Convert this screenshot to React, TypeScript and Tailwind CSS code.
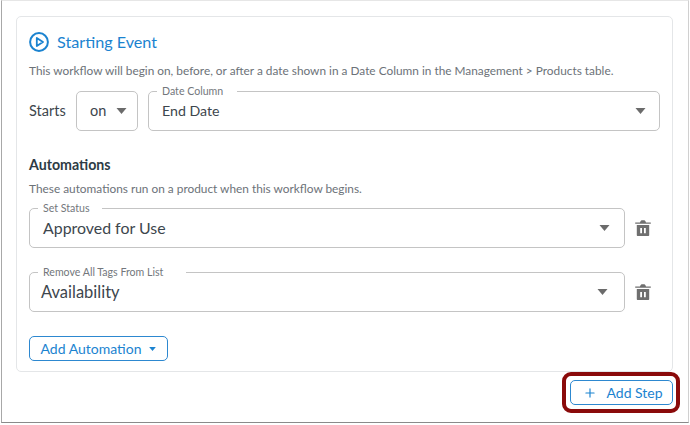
import { Plus } from 'lucide-react';

function Caret({ className = '' }: { className?: string }) {
  return (
    <svg viewBox="0 0 10 6" className={`w-[11px] h-[6px] ${className}`}>
      <path d="M0 0 H10 L5 6 Z" fill="currentColor" />
    </svg>
  );
}

function PlayCircle() {
  return (
    <svg viewBox="0 0 20 20" className="w-5 h-5 shrink-0 text-[#1b83d0]" fill="none" stroke="currentColor">
      <circle cx="10" cy="10" r="8.9" strokeWidth="2" />
      <path d="M7.8 6 L14 10 L7.8 14 Z" strokeWidth="1.8" strokeLinejoin="round" />
    </svg>
  );
}

function Trash() {
  return (
    <svg viewBox="0 0 16 16" className="w-4 h-4 shrink-0 text-[#6f6f6f]" fill="currentColor">
      <path d="M5 2.4 C5.4.8 6.4.2 7.2.2 H8.8 C9.6.2 10.6.8 11 2.4 H15.8 V3.7 H.2 V2.4 Z" />
      <path fillRule="evenodd" d="M1.8 5 H14.2 V15 C14.2 15.6 13.8 16 13.2 16 H2.8 C2.2 16 1.8 15.6 1.8 15 Z M5.2 8 V13.2 H7 V8 Z M9 8 V13.2 H10.8 V8 Z" />
    </svg>
  );
}

function LabeledSelect({
  label,
  value,
  textClass,
  notchClass,
  caretClass = 'pr-[13px]',
}: {
  label: string;
  value: string;
  textClass: string;
  notchClass: string;
  caretClass?: string;
}) {
  return (
    <div className={`relative flex-1 h-10 flex items-center justify-between border border-[#c4c4c4] rounded-[5px] ${caretClass}`}>
      <span className={`absolute -top-[8px] left-[8px] bg-white pl-[5px] text-[10.6px] leading-[14px] text-[#73777c] ${notchClass}`}>
        {label}
      </span>
      <span className={`text-[#3d464d] ${textClass}`}>{value}</span>
      <Caret className="text-[#6b6b6b]" />
    </div>
  );
}

export default function App() {
  return (
    <div className="w-[690px] h-[425px] bg-[#ffffff] overflow-hidden font-['Lato',sans-serif]">
      <div className="h-[423px] ml-[1px] mr-[1px] border-l border-r border-b border-t border-l-[#a8a8a8] border-r-[#d0d0d0] border-b-[#8a8a8a] border-t-[#e6e6e6] pt-[15px] pl-[14px] pr-[15px]">
        {/* Starting event card */}
        <div className="h-[356px] border border-[#e4e6e8] rounded-[5px] pt-[15px] pl-[12px] pr-[12px]">
          <div className="flex items-center gap-2 h-5">
            <PlayCircle />
            <h2 className="text-[16.2px] text-[#1b83d0]">Starting Event</h2>
          </div>
          <p className="mt-[11px] text-[11.85px] leading-[16px] text-[#6c7278] whitespace-nowrap">
            This workflow will begin on, before, or after a date shown in a Date Column in the Management &gt; Products table.
          </p>
          <div className="mt-[12px] flex items-center">
            <span className="text-[14.5px] text-[#3d464d] w-[47px]">Starts</span>
            <div className="w-[62px] h-10 flex items-center gap-[10px] border border-[#c4c4c4] rounded-[5px] pl-[13px] mr-[10px]">
              <span className="text-[14.5px] text-[#3d464d]">on</span>
              <Caret className="text-[#6b6b6b]" />
            </div>
            <LabeledSelect
              label="Date Column"
              value="End Date"
              textClass="pl-[13px] text-[14.2px]"
              notchClass="pr-[14px]"
            />
          </div>

          <h3 className="mt-[25px] text-[14.2px] font-bold leading-[18px] text-[#2d3b45]">Automations</h3>
          <p className="mt-[7px] text-[11.85px] leading-[16px] text-[#6c7278]">
            These automations run on a product when this workflow begins.
          </p>

          <div className="mt-[11px] flex flex-col gap-[24px] pr-[9px]">
            <div className="flex items-center gap-[10px]">
              <LabeledSelect
                label="Set Status"
                value="Approved for Use"
                textClass="pl-[13px] text-[15.9px]"
                notchClass="pr-[12px]"
                caretClass="pr-[14px]"
              />
              <Trash />
            </div>
            <div className="flex items-center gap-[10px]">
              <LabeledSelect
                label="Remove All Tags From List"
                value="Availability"
                textClass="pl-[11px] text-[16.5px]"
                notchClass="pr-[23px]"
                caretClass="pr-[16px]"
              />
              <Trash />
            </div>
          </div>

          <button className="mt-[24px] h-[25px] w-[139px] flex items-center justify-center gap-[8px] border border-[#2d88d0] rounded-[5px] text-[14px] text-[#1b83d0]">
            Add Automation
            <Caret className="!w-[7px] !h-[4px]" />
          </button>
        </div>

        {/* Add step with highlight */}
        <div className="flex justify-end">
          <div className="w-[118px] h-[41px] -mr-[7px] border-[4px] border-[#8a0a0a] rounded-[9px] flex items-center justify-center">
            <button className="w-[103px] h-[25px] flex items-center gap-[10px] pl-[12px] border border-[#2d88d0] rounded-[5px] text-[14px] text-[#1b83d0]">
              <Plus className="w-[14px] h-[14px]" strokeWidth={2} />
              Add Step
            </button>
          </div>
        </div>
      </div>
    </div>
  );
}
